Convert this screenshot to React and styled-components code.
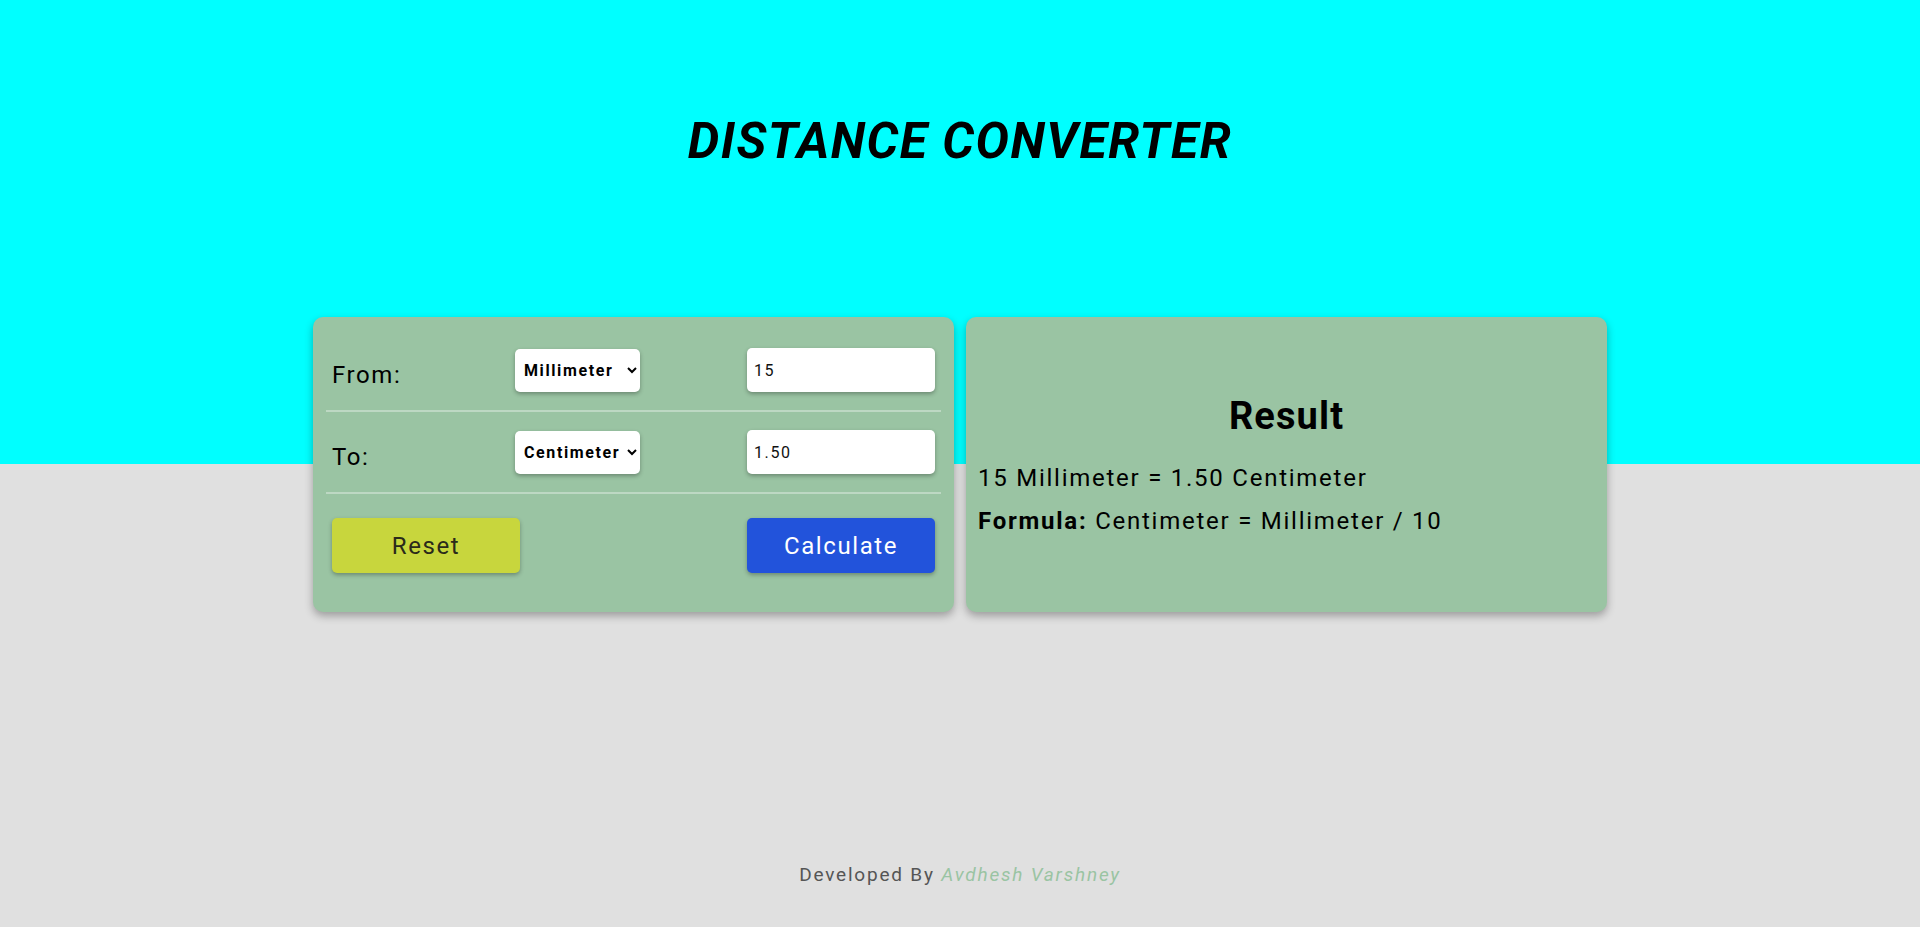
import styled, { createGlobalStyle } from "styled-components";

const GlobalStyle = createGlobalStyle`
  html, body {
    margin: 0;
    padding: 0;
  }
  body {
    font-family: Roboto, "Liberation Sans", sans-serif;
    background: linear-gradient(to bottom, #00ffff 50%, #e0e0e0 50%);
    min-height: 100vh;
  }
  * {
    box-sizing: border-box;
  }
`;

// Page wrapper
const Page = styled.div`
  display: flex;
  flex-direction: column;
  align-items: center;
  min-height: 100vh;
`;

const Title = styled.h1`
  margin: 0;
  padding-top: 112px;
  font-size: 50px;
  font-weight: 700;
  font-style: italic;
  letter-spacing: 1.5px;
  color: #000;
`;

const Cards = styled.div`
  display: grid;
  grid-template-columns: 641px 641px;
  gap: 12px;
  margin-top: 147px;
`;

const Card = styled.div`
  background-color: #9ac4a3;
  border-radius: 10px;
  box-shadow: 0 4px 8px rgba(0, 0, 0, 0.3);
  height: 295px;
  padding: 13px;
`;

// Converter card
const Row = styled.div`
  display: grid;
  grid-template-columns: 183px 232px 1fr;
  align-items: center;
  padding: 18px 5px 18px 6px;
  border-bottom: 2px solid rgba(255, 255, 255, 0.35);
`;

const Label = styled.label`
  font-size: 24px;
  letter-spacing: 1.6px;
  color: #000;
  margin-top: 10px;
`;

const Select = styled.select`
  width: 125px;
  height: 43px;
  border: none;
  border-radius: 5px;
  background: #fff;
  padding: 0 2px 0 5px;
  font-family: Roboto, "Liberation Sans", sans-serif;
  font-size: 16px;
  font-weight: 700;
  letter-spacing: 1.6px;
  color: #000;
  box-shadow: 0 2px 4px rgba(0, 0, 0, 0.3);
  outline: none;
`;

const Input = styled.input`
  width: 188px;
  height: 44px;
  border: none;
  border-radius: 5px;
  background: #fff;
  padding: 0 7px;
  font-family: Roboto, "Liberation Sans", sans-serif;
  font-size: 16px;
  letter-spacing: 1.6px;
  color: #111;
  box-shadow: 0 2px 4px rgba(0, 0, 0, 0.3);
  outline: none;
`;

const ButtonRow = styled.div`
  display: grid;
  grid-template-columns: 415px 1fr;
  padding: 24px 5px 26px 6px;
`;

const Button = styled.button`
  width: 188px;
  height: 55px;
  border: none;
  border-radius: 5px;
  background-color: ${(p) => (p.$primary ? "#2253db" : "#c8d63d")};
  color: ${(p) => (p.$primary ? "#fff" : "#2a2a1a")};
  font-family: Roboto, "Liberation Sans", sans-serif;
  font-size: 24px;
  letter-spacing: 1.6px;
  box-shadow: 0 2px 4px rgba(0, 0, 0, 0.3);
  cursor: pointer;
`;

// Result card
const ResultCard = styled(Card)`
  display: flex;
  flex-direction: column;
  justify-content: center;
  padding: 13px 12px;
`;

const ResultTitle = styled.h2`
  margin: 0 0 26px;
  text-align: center;
  font-size: 38px;
  font-weight: 700;
  letter-spacing: 1.1px;
  color: #000;
`;

const ResultLine = styled.p`
  margin: 0 0 15px;
  font-size: 24px;
  letter-spacing: 1.75px;
  color: #000;
  &:last-child {
    margin-bottom: 0;
  }
`;

const Footer = styled.footer`
  margin-top: auto;
  padding-bottom: 41px;
  font-size: 19px;
  letter-spacing: 1.8px;
  color: #555;
`;

const Author = styled.span`
  font-style: italic;
  color: #9ac4a3;
`;

export default function App() {
  return (
    <Page>
      <GlobalStyle />
      <Title>DISTANCE CONVERTER</Title>

      <Cards>
        <Card>
          <Row>
            <Label>From:</Label>
            <div>
              <Select defaultValue="Millimeter">
                <option>Millimeter</option>
                <option>Centimeter</option>
                <option>Meter</option>
                <option>Kilometer</option>
              </Select>
            </div>
            <Input defaultValue="15" />
          </Row>
          <Row>
            <Label>To:</Label>
            <div>
              <Select defaultValue="Centimeter">
                <option>Millimeter</option>
                <option>Centimeter</option>
                <option>Meter</option>
                <option>Kilometer</option>
              </Select>
            </div>
            <Input defaultValue="1.50" />
          </Row>
          <ButtonRow>
            <Button>Reset</Button>
            <Button $primary>Calculate</Button>
          </ButtonRow>
        </Card>

        <ResultCard>
          <ResultTitle>Result</ResultTitle>
          <ResultLine>15 Millimeter = 1.50 Centimeter</ResultLine>
          <ResultLine>
            <b>Formula:</b> Centimeter = Millimeter / 10
          </ResultLine>
        </ResultCard>
      </Cards>

      <Footer>
        Developed By <Author>Avdhesh Varshney</Author>
      </Footer>
    </Page>
  );
}
